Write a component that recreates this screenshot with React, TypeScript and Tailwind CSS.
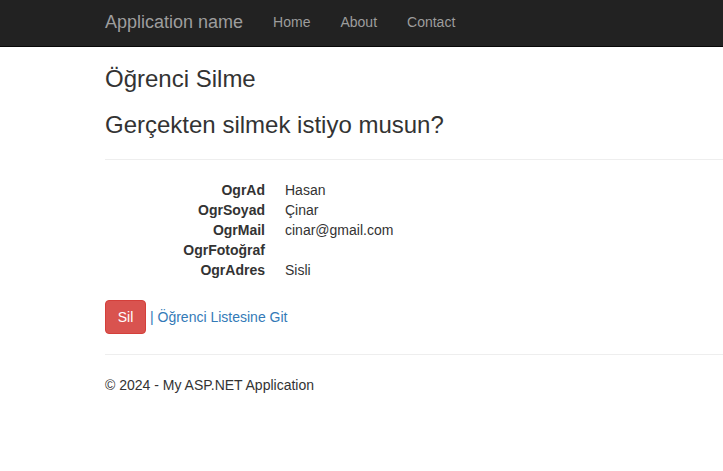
import React from 'react';

const rows: { label: string; value: string }[] = [
  { label: 'OgrAd', value: 'Hasan' },
  { label: 'OgrSoyad', value: 'Çinar' },
  { label: 'OgrMail', value: 'cinar@gmail.com' },
  { label: 'OgrFotoğraf', value: '' },
  { label: 'OgrAdres', value: 'Sisli' },
];

export default function App() {
  return (
    <div className="min-h-[471px] bg-white text-[14px] leading-[20px] text-[#333333] font-['Liberation_Sans',Arial,sans-serif]">
      {/* Navbar */}
      <nav className="h-[47px] bg-[#222222] border-b border-[#080808]">
        <div className="flex h-[46px] items-center pl-[90px] pb-[2px]">
          <a className="px-[15px] text-[18px] leading-[20px] text-[#9d9d9d]">Application name</a>
          <ul className="flex">
            <li><a className="block px-[15px] text-[#9d9d9d]">Home</a></li>
            <li><a className="block px-[15px] text-[#9d9d9d]">About</a></li>
            <li><a className="block px-[15px] text-[#9d9d9d]">Contact</a></li>
          </ul>
        </div>
      </nav>

      <div className="pl-[105px]">
        <h3 className="mt-[19px] text-[24px] leading-[26.4px] font-medium">Öğrenci Silme</h3>
        <h3 className="mt-[20px] text-[24px] leading-[26.4px] font-medium">Gerçekten silmek istiyo musun?</h3>

        <hr className="mt-[20px] mb-[20px] border-t border-[#eeeeee]" />

        <dl className="mb-[20px]">
          {rows.map((r) => (
            <div key={r.label} className="flex">
              <dt className="w-[160px] shrink-0 text-right font-bold">{r.label}</dt>
              <dd className="ml-[20px] min-h-[20px]">{r.value}</dd>
            </div>
          ))}
        </dl>

        <div className="flex items-center">
          <button className="h-[34px] w-[41px] rounded-[4px] bg-[#d9534f] border border-[#d43f3a] text-white">
            Sil
          </button>
          <a className="ml-[4px] text-[#337ab7]">| Öğrenci Listesine Git</a>
        </div>

        <hr className="mt-[20px] mb-[20px] border-t border-[#eeeeee]" />
        <footer>
          <p>© 2024 - My ASP.NET Application</p>
        </footer>
      </div>
    </div>
  );
}
